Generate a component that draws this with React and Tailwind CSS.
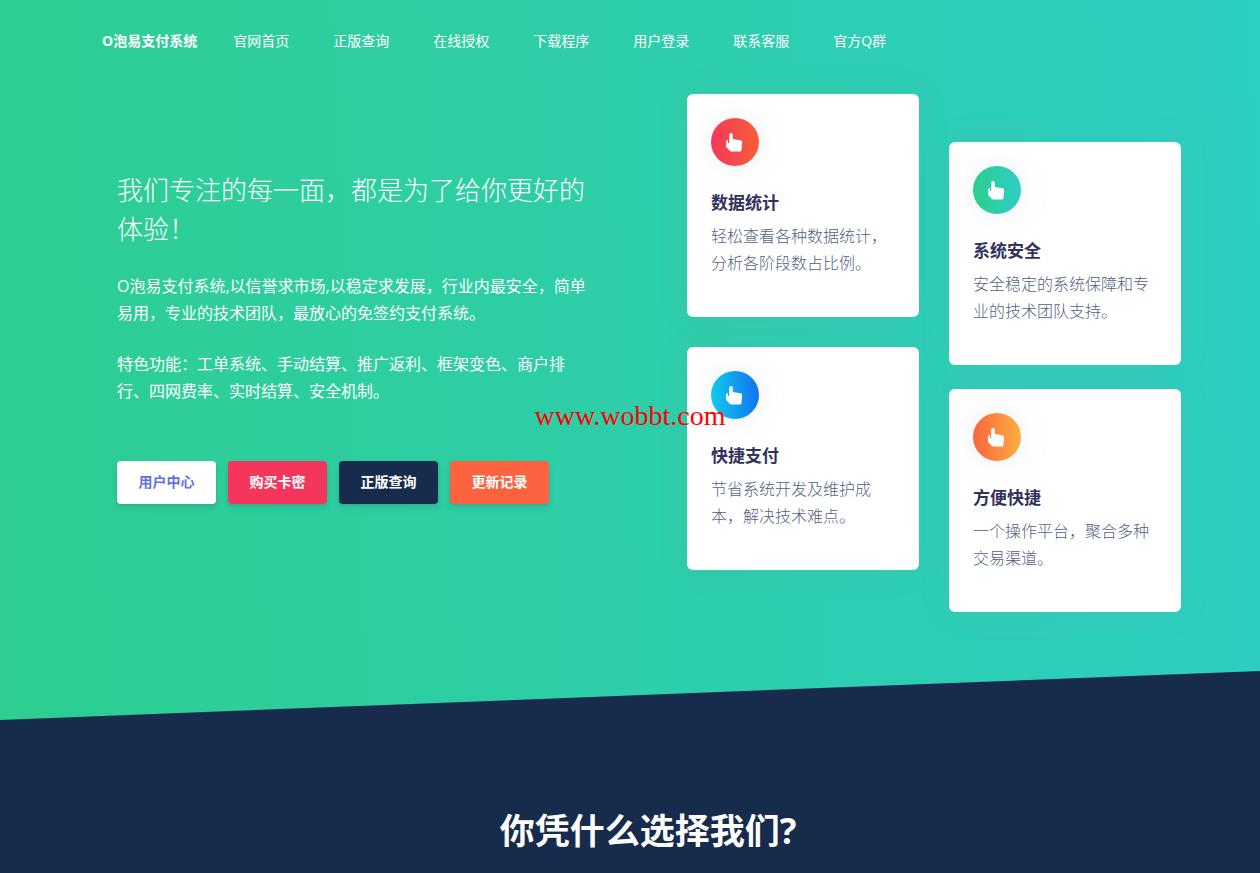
import { clsx } from 'clsx';

// Enlaces del menú superior
const navLinks = ['官网首页', '正版查询', '在线授权', '下载程序', '用户登录', '联系客服', '官方Q群'];

// Botones de acción de la portada
const actions = [
  { label: '用户中心', style: 'bg-white text-[#5e72e4]' },
  { label: '购买卡密', style: 'bg-[#f5365c] text-white' },
  { label: '正版查询', style: 'bg-[#172b4d] text-white' },
  { label: '更新记录', style: 'bg-[#fb6340] text-white' },
];

// Tarjetas agrupadas por columna
const leftCards = [
  { title: '数据统计', text: '轻松查看各种数据统计，分析各阶段数占比例。', icon: 'from-[#f5365c] to-[#f56036]' },
  { title: '快捷支付', text: '节省系统开发及维护成本，解决技术难点。', icon: 'from-[#11cdef] to-[#1171ef]' },
];
const rightCards = [
  { title: '系统安全', text: '安全稳定的系统保障和专业的技术团队支持。', icon: 'from-[#2dce89] to-[#2dcecc]' },
  { title: '方便快捷', text: '一个操作平台，聚合多种交易渠道。', icon: 'from-[#fb6340] to-[#fbb140]' },
];

const HandIcon = () => (
  <svg viewBox="0 0 20 20" className="h-5 w-5 fill-white" aria-hidden="true">
    <path d="M4.200 2.700a1.800 1.800 0 0 1 3.600 0V7l7.700 1.200c1.100.2 1.700.9 1.600 2l-.7 8c-.1.8-.5 1.200-1.300 1.200H6.200c-.5 0-.9-.2-1.200-.5L1.600 15.600c-.4-.5-.6-1-.6-1.600v-3.500c0-1.300.7-2.200 1.900-2.400v2.300c0 .5.3.7.6.7s.7-.2.7-.7z" />
  </svg>
);

const FeatureCard = ({ title, text, icon }) => (
  <article className="rounded-md bg-white px-6 pt-6 pb-10 shadow-[0_0_32px_rgba(136,152,170,0.1)]">
    <div
      className={clsx(
        'flex h-12 w-12 items-center justify-center rounded-full bg-linear-87/srgb shadow-[0_0_32px_rgba(136,152,170,0.15)]',
        icon
      )}>
      <HandIcon />
    </div>
    <h2 className="mt-6 text-[17px] leading-[26px] font-bold text-[#32325d]">{title}</h2>
    <p className="mt-[7px] text-base leading-[27px] font-light text-[#525f7f]">{text}</p>
  </article>
);

const App = () => {
  return (
    <div
      lang="zh-CN"
      className="relative min-h-screen overflow-hidden bg-[#172b4d] font-['Open_Sans','Noto_Sans_CJK_SC',sans-serif] text-white">
      {/* Portada con degradado */}
      <div className="bg-linear-87/srgb from-[#2dce90] to-[#2dcec3]">
        <header className="pl-10">
          <nav className="mx-auto flex max-w-[1096px] items-center pt-[30px] text-sm leading-[22px]">
            <a href="#" className="mr-9 font-bold">
              O泡易支付系统
            </a>
            <ul className="flex gap-11">
              {navLinks.map(link => (
                <li key={link}>
                  <a href="#">{link}</a>
                </li>
              ))}
            </ul>
          </nav>
        </header>

        <section className="pt-[42px] pl-[38px]">
          <div className="mx-auto grid max-w-[1096px] grid-cols-2 items-center">
            {/* Presentación y botones */}
            <div className="pr-[62px] pb-8 pl-4">
              <h1 className="text-[26px] leading-[39px] font-light">我们专注的每一面，都是为了给你更好的体验！</h1>
              <p className="mt-6 text-base leading-[27px]">
                O泡易支付系统,以信誉求市场,以稳定求发展，行业内最安全，简单易用，专业的技术团队，最放心的免签约支付系统。
              </p>
              <p className="mt-6 text-base leading-[27px]">
                特色功能：工单系统、手动结算、推广返利、框架变色、商户排行、四网费率、实时结算、安全机制。
              </p>
              <div className="mt-14 flex gap-3">
                {actions.map(({ label, style }) => (
                  <button
                    key={label}
                    type="button"
                    className={clsx(
                      'h-[43px] min-w-[99px] rounded px-5 text-sm font-bold whitespace-nowrap shadow-[0_4px_6px_rgba(50,50,93,0.11),0_1px_3px_rgba(0,0,0,0.08)]',
                      style
                    )}>
                    {label}
                  </button>
                ))}
              </div>
            </div>

            {/* Dos columnas de tarjetas, la derecha más abajo */}
            <div className="grid grid-cols-2 items-start gap-[30px] pr-4 pl-[38px]">
              <div className="flex flex-col gap-[30px]">
                {leftCards.map(card => (
                  <FeatureCard key={card.title} {...card} />
                ))}
              </div>
              <div className="flex flex-col gap-6 pt-12">
                {rightCards.map(card => (
                  <FeatureCard key={card.title} {...card} />
                ))}
              </div>
            </div>
          </div>
        </section>

        {/* Corte diagonal hacia la sección oscura */}
        <svg viewBox="0 0 1260 50" preserveAspectRatio="none" className="mt-[59px] block h-[49px] w-full" aria-hidden="true">
          <polygon points="0,50 1260,0 1260,50" className="fill-[#172b4d]" />
        </svg>
      </div>

      <section className="pt-[84px] pb-4 pl-9 text-center">
        <h2 className="text-[35px] leading-[53px] font-bold">你凭什么选择我们?</h2>
      </section>

      {/* Marca de agua */}
      <div className="absolute top-[400px] left-1/2 -translate-x-1/2 font-['Liberation_Serif',serif] text-[28px] leading-8 text-[#f00]">
        www.wobbt.com
      </div>
    </div>
  );
};

export default App;
